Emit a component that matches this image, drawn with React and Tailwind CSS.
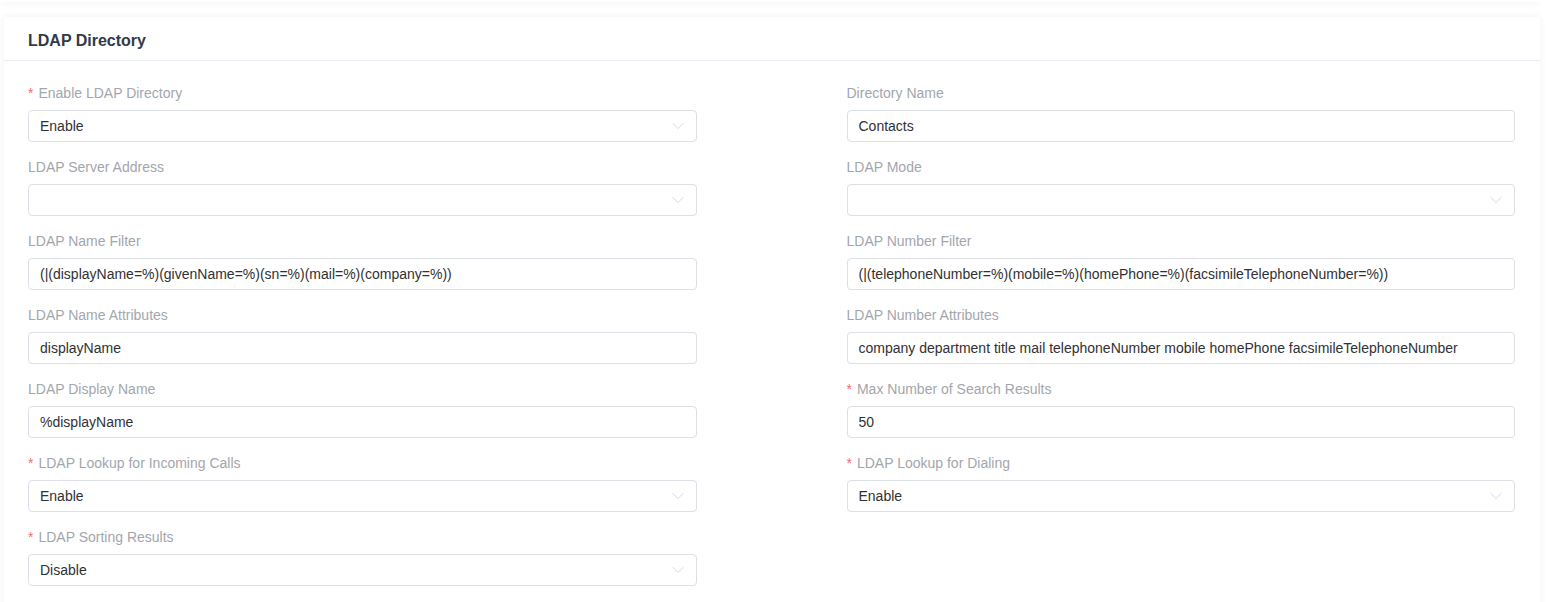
import { ChevronDown } from "lucide-react";

const fields = [
  [
    { label: "Enable LDAP Directory", required: true, value: "Enable", select: true },
    { label: "Directory Name", value: "Contacts" },
  ],
  [
    { label: "LDAP Server Address", value: "", select: true },
    { label: "LDAP Mode", value: "", select: true },
  ],
  [
    { label: "LDAP Name Filter", value: "(|(displayName=%)(givenName=%)(sn=%)(mail=%)(company=%))" },
    { label: "LDAP Number Filter", value: "(|(telephoneNumber=%)(mobile=%)(homePhone=%)(facsimileTelephoneNumber=%))" },
  ],
  [
    { label: "LDAP Name Attributes", value: "displayName" },
    { label: "LDAP Number Attributes", value: "company department title mail telephoneNumber mobile homePhone facsimileTelephoneNumber" },
  ],
  [
    { label: "LDAP Display Name", value: "%displayName" },
    { label: "Max Number of Search Results", required: true, value: "50" },
  ],
  [
    { label: "LDAP Lookup for Incoming Calls", required: true, value: "Enable", select: true },
    { label: "LDAP Lookup for Dialing", required: true, value: "Enable", select: true },
  ],
  [{ label: "LDAP Sorting Results", required: true, value: "Disable", select: true }, null],
];

function Field({ f }) {
  if (!f) return <div />;
  return (
    <div className="flex flex-col">
      <div className="h-5 leading-5 text-[14px] text-[#a3a6ad] flex items-center">
        {f.required && <span className="text-[#f56c6c] mr-[5px] text-[14px]">*</span>}
        {f.label}
      </div>
      <div className="mt-[7px] h-8 border border-[#dcdfe6] rounded-[4px] flex items-center pl-[11px] pr-[8px] text-[14px] text-[#303133]">
        <span className="flex-1 whitespace-nowrap overflow-hidden">{f.value}</span>
        {f.select && <ChevronDown className="w-[20px] h-[20px] text-[#cdd0d6]" strokeWidth={1} />}
      </div>
    </div>
  );
}

export default function App() {
  return (
    <div className="min-h-screen bg-white font-['Liberation_Sans',Arial,sans-serif] overflow-hidden">
      <div className="h-[3px] -mt-px w-[1540px] bg-white shadow-[0_2px_6px_rgba(0,0,0,0.06)]" />
      <div className="ml-[4px] mt-[15px] w-[1536px] bg-white rounded-[4px] shadow-[0_0_8px_rgba(0,0,0,0.06)] pb-8">
        <div className="h-[44px] flex items-center px-6 pt-[4px] border-b border-[#ebeef5]">
          <h2 className="text-[16px] font-bold text-[#2f3a4a]">LDAP Directory</h2>
        </div>
        <div className="pl-6 pr-[25px] pt-[22px] grid grid-cols-2 gap-x-[150px] gap-y-[15px]">
          {fields.map((row, i) => (
            <div key={i} className="contents">
              <Field f={row[0]} />
              <Field f={row[1]} />
            </div>
          ))}
        </div>
      </div>
    </div>
  );
}
